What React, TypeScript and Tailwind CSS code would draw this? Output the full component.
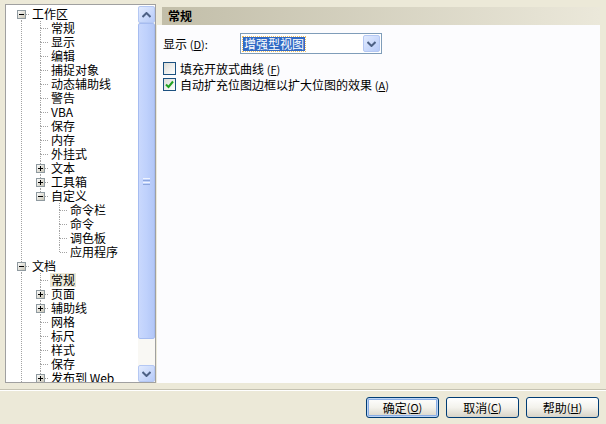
import React from 'react';

type TreeNode = {
  label: string;
  children?: TreeNode[];
  expanded?: boolean;
  selected?: boolean;
};

type Row = {
  label: string;
  level: number;
  rails: boolean[]; // does the ancestor column keep going
  hasNext: boolean;
  hasPrev: boolean;
  box: 'plus' | 'minus' | null;
  selected?: boolean;
};

const tree: TreeNode[] = [
  {
    label: '工作区',
    expanded: true,
    children: [
      { label: '常规' },
      { label: '显示' },
      { label: '编辑' },
      { label: '捕捉对象' },
      { label: '动态辅助线' },
      { label: '警告' },
      { label: 'VBA' },
      { label: '保存' },
      { label: '内存' },
      { label: '外挂式' },
      { label: '文本', children: [{ label: '段落' }] },
      { label: '工具箱', children: [{ label: '挑选工具' }] },
      {
        label: '自定义',
        expanded: true,
        children: [{ label: '命令栏' }, { label: '命令' }, { label: '调色板' }, { label: '应用程序' }],
      },
    ],
  },
  {
    label: '文档',
    expanded: true,
    children: [
      { label: '常规', selected: true },
      { label: '页面', children: [{ label: '大小' }] },
      { label: '辅助线', children: [{ label: '水平' }] },
      { label: '网格' },
      { label: '标尺' },
      { label: '样式' },
      { label: '保存' },
      { label: '发布到 Web', children: [{ label: '图像' }] },
      { label: '打印' },
    ],
  },
  { label: '全局', children: [{ label: '打印' }] },
];

const flatten = (nodes: TreeNode[], level: number, rails: boolean[], out: Row[]) => {
  nodes.forEach((n, i) => {
    const hasNext = i < nodes.length - 1;
    const hasKids = !!n.children && n.children.length > 0;
    out.push({
      label: n.label,
      level,
      rails,
      hasNext,
      hasPrev: !(level === 0 && i === 0),
      box: hasKids ? (n.expanded ? 'minus' : 'plus') : null,
      selected: n.selected,
    });
    if (hasKids && n.expanded) flatten(n.children!, level + 1, [...rails, hasNext], out);
  });
  return out;
};

// only the rows that fit in the list (the rest is scrolled away)
const rows = flatten(tree, 0, [], []).slice(0, 27);

const DOT = '#a3a3a3';

const RailCell = ({ on }: { on: boolean }) => (
  <svg width="19" height="14" className="shrink-0">
    {on && <line x1="9.5" y1="0" x2="9.5" y2="14" stroke={DOT} strokeDasharray="1 1" />}
  </svg>
);

const NodeCell = ({ row }: { row: Row }) => (
  <svg width="19" height="14" className="shrink-0">
    {row.hasPrev && <line x1="9.5" y1="0" x2="9.5" y2="7" stroke={DOT} strokeDasharray="1 1" />}
    {row.hasNext && <line x1="9.5" y1="7" x2="9.5" y2="14" stroke={DOT} strokeDasharray="1 1" />}
    <line x1="10" y1="7.5" x2="18" y2="7.5" stroke={DOT} strokeDasharray="1 1" />
    {row.box && (
      <g>
        <defs>
          <linearGradient id="bx" x1="0" y1="0" x2="1" y2="1">
            <stop offset="0" stopColor="#ffffff" />
            <stop offset="1" stopColor="#c6c2b2" />
          </linearGradient>
        </defs>
        <rect x="5.5" y="3.5" width="8" height="8" fill="url(#bx)" stroke="#8f9aa0" />
        <line x1="7" y1="7.5" x2="12" y2="7.5" stroke="#000" />
        {row.box === 'plus' && <line x1="9.5" y1="5" x2="9.5" y2="10" stroke="#000" />}
      </g>
    )}
  </svg>
);

const ScrollArrow = ({ up }: { up?: boolean }) => (
  <div className="h-[17px] w-[17px] shrink-0 rounded-[2px] border border-[#b5c8f3] bg-gradient-to-br from-[#e2ebfe] to-[#b7cbf9] flex items-center justify-center">
    <svg width="9" height="6" viewBox="0 0 9 6">
      <path d={up ? 'M0.5 5L4.5 1L8.5 5' : 'M0.5 1L4.5 5L8.5 1'} fill="none" stroke="#4d6185" strokeWidth="2" />
    </svg>
  </div>
);

const Scrollbar = () => (
  <div className="w-[17px] h-full flex flex-col bg-[#f9f8f4] shrink-0">
    <ScrollArrow up />
    <div className="h-[316px] rounded-[2px] border border-[#a6bcf0] bg-gradient-to-r from-[#c9d8fd] via-[#bfd1fc] to-[#b3c7f7] flex items-center justify-center">
      <div className="flex flex-col gap-[1px]">
        <div className="w-[7px] h-[1px] bg-[#eef3fe]" />
        <div className="w-[7px] h-[1px] bg-[#8ca6dd]" />
        <div className="w-[7px] h-[1px] bg-[#eef3fe]" />
        <div className="w-[7px] h-[1px] bg-[#8ca6dd]" />
      </div>
    </div>
    <div className="flex-1" />
    <ScrollArrow />
  </div>
);

const U = ({ c }: { c: string }) => <span className="underline">{c}</span>;

const CheckBox = ({ checked }: { checked?: boolean }) => (
  <div className="w-[13px] h-[13px] border border-[#1c5180] bg-gradient-to-br from-[#dcdcd7] to-[#ffffff] flex items-center justify-center shrink-0">
    {checked && (
      <svg width="9" height="9" viewBox="0 0 9 9">
        <path d="M1 4.5L3.5 7L8 1.5" fill="none" stroke="#21a121" strokeWidth="2" />
      </svg>
    )}
  </div>
);

const XPButton = ({ label, k, primary }: { label: string; k: string; primary?: boolean }) => (
  <button
    className={`w-[73px] h-[21px] rounded-[3px] border border-[#003c74] bg-gradient-to-b from-[#ffffff] via-[#f3f2ec] to-[#d8d4c8] text-[12px] text-black flex items-center justify-center ${
      primary ? 'shadow-[inset_0_0_0_1px_#bcd4f6,inset_0_0_0_2px_#89ade4]' : ''
    }`}
  >
    {label}
    <span className="text-[11px]">
      (<U c={k} />)
    </span>
  </button>
);

export default function App() {
  return (
    <div className="w-[606px] h-[424px] bg-[#ece9d8] overflow-hidden font-['Noto_Sans_CJK_SC','Liberation_Sans',sans-serif] text-[12px] text-black leading-none">
      <div className="flex pt-[4px] pl-[5px] pr-[6px] h-[383px]">
        {/* tree */}
        <div className="w-[151px] h-full border border-[#a0a0a0] bg-white flex">
          <div className="flex-1 overflow-hidden pt-[2px] pl-[6px]">
            {rows.map((r, i) => (
              <div key={i} className="h-[14px] flex items-center whitespace-nowrap">
                {r.rails.map((on, j) => (
                  <RailCell key={j} on={on} />
                ))}
                <NodeCell row={r} />
                <span className={`px-[1px] h-[14px] flex items-center ${r.selected ? 'bg-[#ece9d8]' : ''}`}>
                  {r.label}
                </span>
              </div>
            ))}
          </div>
          <div className="pt-[1px] h-full">
            <Scrollbar />
          </div>
        </div>

        {/* page */}
        <div className="flex-1 flex flex-col ml-[1px]">
          <div className="h-[21px] pt-[3px] pl-[5px] shrink-0">
            <div className="h-[18px] bg-gradient-to-r from-[#c2bea9] to-[#ebe8da] flex items-center pl-[6px] font-bold">
              常规
            </div>
          </div>
          <div className="flex-1 bg-[#fcfcfe] pl-[6px] pt-[8px]">
            <div className="flex items-center h-[21px]">
              <span className="w-[77px]">
                显示 <span className="text-[11px]">(<U c="D" />):</span>
              </span>
              <div className="w-[142px] h-[21px] border border-[#7f9db9] bg-white flex items-center pl-[2px] pr-[1px]">
                <span className="bg-[#316ac5] text-white h-[14px] px-[1px] flex items-center outline outline-1 outline-dotted outline-[#f0c060]">
                  增强型视图
                </span>
                <div className="flex-1" />
                <div className="w-[17px] h-[17px] rounded-[2px] border border-[#b5c8f3] bg-gradient-to-br from-[#e2ebfe] to-[#b7cbf9] flex items-center justify-center">
                  <svg width="9" height="6" viewBox="0 0 9 6">
                    <path d="M0.5 1L4.5 5L8.5 1" fill="none" stroke="#4d6185" strokeWidth="2" />
                  </svg>
                </div>
              </div>
            </div>
            <div className="flex items-center gap-[4px] mt-[8px] h-[13px]">
              <CheckBox />
              <span>
                填充开放式曲线 <span className="text-[11px]">(<U c="F" />)</span>
              </span>
            </div>
            <div className="flex items-center gap-[4px] mt-[3px] h-[13px]">
              <CheckBox checked />
              <span>
                自动扩充位图边框以扩大位图的效果 <span className="text-[11px]">(<U c="A" />)</span>
              </span>
            </div>
          </div>
        </div>
      </div>

      <div className="mt-[6px] h-[1px] bg-[#c5c2b2]" />
      <div className="h-[1px] bg-white" />

      <div className="flex justify-end gap-[7px] pr-[7px] mt-[6px]">
        <XPButton label="确定" k="O" primary />
        <XPButton label="取消" k="C" />
        <XPButton label="帮助" k="H" />
      </div>
    </div>
  );
}
